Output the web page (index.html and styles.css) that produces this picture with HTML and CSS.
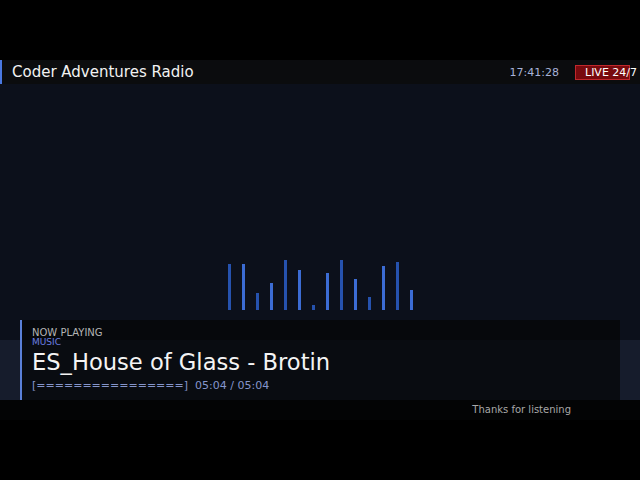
FILE: index.html
```html
<!DOCTYPE html>
<html>
<head>
<meta charset="utf-8">
<link rel="stylesheet" href="styles.css">
</head>
<body>
<div class="frame">
  <div class="letterbox-top"></div>
  <header class="topbar">
    <div class="station">Coder Adventures Radio</div>
    <div class="right">
      <span class="clock">17:41:28</span>
      <span class="live">LIVE 24/7</span>
    </div>
  </header>
  <main class="stage">
    <div class="viz">
      <span class="bar dark" style="height:46px"></span>
      <span class="bar light" style="height:46px"></span>
      <span class="bar dark" style="height:17px"></span>
      <span class="bar light" style="height:27px"></span>
      <span class="bar dark" style="height:50px"></span>
      <span class="bar light" style="height:40px"></span>
      <span class="bar dark" style="height:5px"></span>
      <span class="bar light" style="height:37px"></span>
      <span class="bar dark" style="height:50px"></span>
      <span class="bar light" style="height:31px"></span>
      <span class="bar dark" style="height:13px"></span>
      <span class="bar light" style="height:44px"></span>
      <span class="bar dark" style="height:48px"></span>
      <span class="bar light" style="height:20px"></span>
    </div>
    <section class="now">
      <div class="label">NOW PLAYING</div>
      <div class="kind">MUSIC</div>
      <div class="title">ES_House of Glass - Brotin</div>
      <div class="progress">[================]&nbsp; 05:04 / 05:04</div>
    </section>
  </main>
  <footer class="foot">Thanks for listening</footer>
</div>
</body>
</html>
```

FILE: styles.css
```css
html, body {
  margin: 0;
  padding: 0;
  background: #000;
}
.frame {
  width: 640px;
  height: 480px;
  overflow: hidden;
  display: flex;
  flex-direction: column;
  font-family: "DejaVu Sans", sans-serif;
  background: #000;
}
.letterbox-top {
  height: 60px;
  flex: none;
}
.topbar {
  height: 24px;
  flex: none;
  box-sizing: border-box;
  background: #0b0c0e;
  border-left: 2px solid #4a78e0;
  display: flex;
  align-items: center;
  justify-content: space-between;
  padding-left: 10px;
}
.station {
  color: #f2f2f2;
  font-size: 15px;
}
.right {
  display: flex;
  align-items: center;
  gap: 16px;
  margin-right: 10px;
}
.clock {
  color: #a7b2d8;
  font-size: 11px;
}
.live {
  display: block;
  width: 35px;
  padding: 0 9px;
  height: 13px;
  line-height: 13px;
  background: #780a0e;
  border: 1px solid #c0282c;
  color: #fff;
  font-size: 11px;
  white-space: nowrap;
  overflow: visible;
}
.stage {
  height: 316px;
  flex: none;
  display: flex;
  flex-direction: column;
  background: linear-gradient(to bottom, #0c101b 0, #0c101b 256px, #161c2c 256px, #161c2c 100%);
}
.viz {
  height: 226px;
  display: flex;
  align-items: flex-end;
  justify-content: center;
  gap: 11px;
  padding-left: 1px;
}
.bar {
  width: 3px;
  display: block;
}
.bar.dark { background: #2652ae; }
.bar.light { background: #3c6cd4; }
.now {
  margin: 10px 20px 0;
  height: 80px;
  box-sizing: border-box;
  border-left: 2px solid #5a80d8;
  background: rgba(4, 5, 6, 0.7);
  padding: 7px 10px 0;
}
.label {
  color: #b4b4b4;
  font-size: 10px;
  line-height: 11px;
}
.kind {
  color: #6a7ee0;
  font-size: 9px;
  line-height: 9px;
}
.title {
  color: #f4f4f4;
  font-size: 22.6px;
  line-height: 28px;
  margin-top: 1px;
}
.progress {
  color: #8595cc;
  font-size: 11px;
  line-height: 14px;
  margin-top: 3px;
}
.foot {
  height: 20px;
  flex: none;
  box-sizing: border-box;
  background: #030405;
  color: #a8a8a8;
  font-size: 10px;
  display: flex;
  align-items: center;
  justify-content: flex-end;
  padding-right: 69px;
  padding-bottom: 2px;
}
```
